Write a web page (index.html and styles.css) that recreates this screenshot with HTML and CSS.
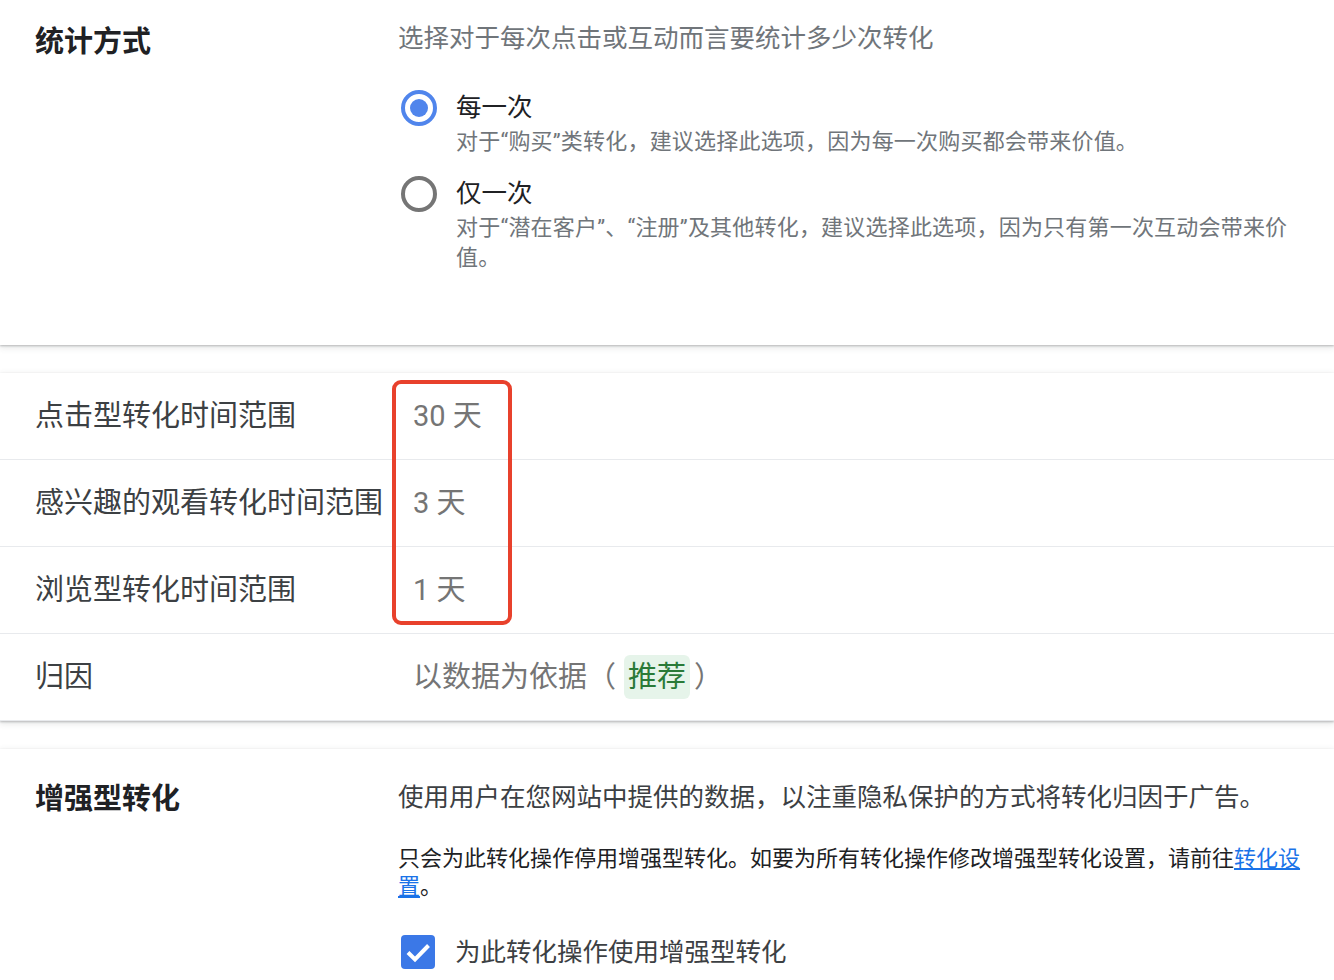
FILE: index.html
```html
<!DOCTYPE html>
<html lang="zh-CN">

<head>
    <meta charset="UTF-8">
    <meta name="viewport" content="width=device-width, initial-scale=1.0">
    <title>转化操作设置</title>
    <link rel="stylesheet" href="styles.css">
</head>

<body>

    <!-- 统计方式 -->
    <div class="panel section">
        <div class="label strong">统计方式</div>
        <div class="content">
            <div class="desc">选择对于每次点击或互动而言要统计多少次转化</div>
            <div class="options">
                <div class="option">
                    <span class="radio checked"></span>
                    <div class="option-text">
                        <div class="option-title">每一次</div>
                        <div class="option-desc">对于“购买”类转化，建议选择此选项，因为每一次购买都会带来价值。</div>
                    </div>
                </div>
                <div class="option">
                    <span class="radio"></span>
                    <div class="option-text">
                        <div class="option-title">仅一次</div>
                        <div class="option-desc">对于“潜在客户”、“注册”及其他转化，建议选择此选项，因为只有第一次互动会带来价值。</div>
                    </div>
                </div>
            </div>
        </div>
    </div>

    <!-- 时间范围 & 归因 -->
    <div class="panel rows">
        <div class="row">
            <div class="label">点击型转化时间范围</div>
            <div class="value">30 天</div>
        </div>
        <div class="row">
            <div class="label">感兴趣的观看转化时间范围</div>
            <div class="value">3 天</div>
        </div>
        <div class="row">
            <div class="label">浏览型转化时间范围</div>
            <div class="value">1 天</div>
        </div>
        <div class="row">
            <div class="label">归因</div>
            <div class="value">以数据为依据（<span class="tag">推荐</span>）</div>
        </div>
        <!-- 红框标注 -->
        <div class="highlight"></div>
    </div>

    <!-- 增强型转化 -->
    <div class="panel section enhanced">
        <div class="label strong">增强型转化</div>
        <div class="content">
            <div class="desc dark">使用用户在您网站中提供的数据，以注重隐私保护的方式将转化归因于广告。</div>
            <p class="note">只会为此转化操作停用增强型转化。如要为所有转化操作修改增强型转化设置，请前往<a href="#">转化设置</a>。</p>
            <label class="check">
                <svg width="34" height="34" viewBox="0 0 34 34">
                    <rect x="0" y="0" width="34" height="34" rx="4" fill="#3b78e7" />
                    <path d="M7 17.5 L14 24.5 L27.5 10.5" fill="none" stroke="#fff" stroke-width="4" />
                </svg>
                <span>为此转化操作使用增强型转化</span>
            </label>
        </div>
    </div>

</body>

</html>
```

FILE: styles.css
```css
body {
    margin: 0;
    background-color: #fff;
    font-family: Roboto, "Noto Sans CJK SC", sans-serif;
    color: #202124;
}

.panel {
    background-color: #fff;
    box-shadow: 0 1px 2px rgba(60, 64, 67, 0.3), 0 2px 6px 1px rgba(60, 64, 67, 0.12);
    margin-bottom: 28px;
}

/* 左标签 + 右内容 */
.section {
    display: grid;
    grid-template-columns: 363px 1fr;
    padding: 20px 30px 72px 35px;
}

.label {
    font-size: 29px;
    line-height: 44px;
    color: #3c4043;
}

.label.strong {
    font-weight: bold;
    color: #202124;
}

.desc {
    font-size: 25.5px;
    line-height: 36px;
    color: #70757a;
}

.desc.dark {
    color: #3c4043;
}

.options {
    margin-top: 33px;
    display: flex;
    flex-direction: column;
    gap: 18px;
}

.option {
    display: flex;
    align-items: flex-start;
}

.radio {
    flex: none;
    width: 36px;
    height: 36px;
    box-sizing: border-box;
    border: 4px solid #757575;
    border-radius: 50%;
    margin: 1px 19px 0 3px;
    display: flex;
    justify-content: center;
    align-items: center;
}

.radio.checked {
    border-color: #5085ec;
}

.radio.checked::after {
    content: "";
    width: 18px;
    height: 18px;
    border-radius: 50%;
    background-color: #5085ec;
}

.option-title {
    font-size: 25.5px;
    line-height: 36px;
    color: #202124;
}

.option-desc {
    font-size: 22px;
    line-height: 30px;
    color: #70757a;
    margin-top: 2px;
    letter-spacing: 0.2px;
}

/* 时间范围行 */
.rows {
    position: relative;
}

.row {
    display: grid;
    grid-template-columns: 363px 1fr;
    align-items: center;
    height: 86px;
    padding-left: 35px;
    border-bottom: 1px solid #e8eaed;
}

.row:last-of-type {
    border-bottom: none;
}

.value {
    padding-left: 15px;
    font-size: 29px;
    line-height: 44px;
    color: #757575;
}

.tag {
    display: inline-block;
    background-color: #e6f4ea;
    color: #2a7a38;
    border-radius: 6px;
    padding: 0 4px;
    margin: 0 4px 0 8px;
}

.highlight {
    position: absolute;
    left: 392px;
    top: 7px;
    width: 120px;
    height: 245px;
    box-sizing: border-box;
    border: 4px solid #e8412c;
    border-radius: 9px;
}

/* 增强型转化 */
.enhanced {
    padding-top: 30px;
    padding-bottom: 40px;
}

.enhanced .label {
    line-height: 40px;
}

.note {
    margin: 30px 0 0;
    font-size: 22px;
    line-height: 28px;
    color: #202124;
}

.note a {
    color: #1a73e8;
    text-decoration: underline;
}

.check {
    display: flex;
    align-items: center;
    gap: 20px;
    margin-top: 33px;
    padding-left: 3px;
    font-size: 25.5px;
    line-height: 36px;
    color: #3c4043;
}
```
